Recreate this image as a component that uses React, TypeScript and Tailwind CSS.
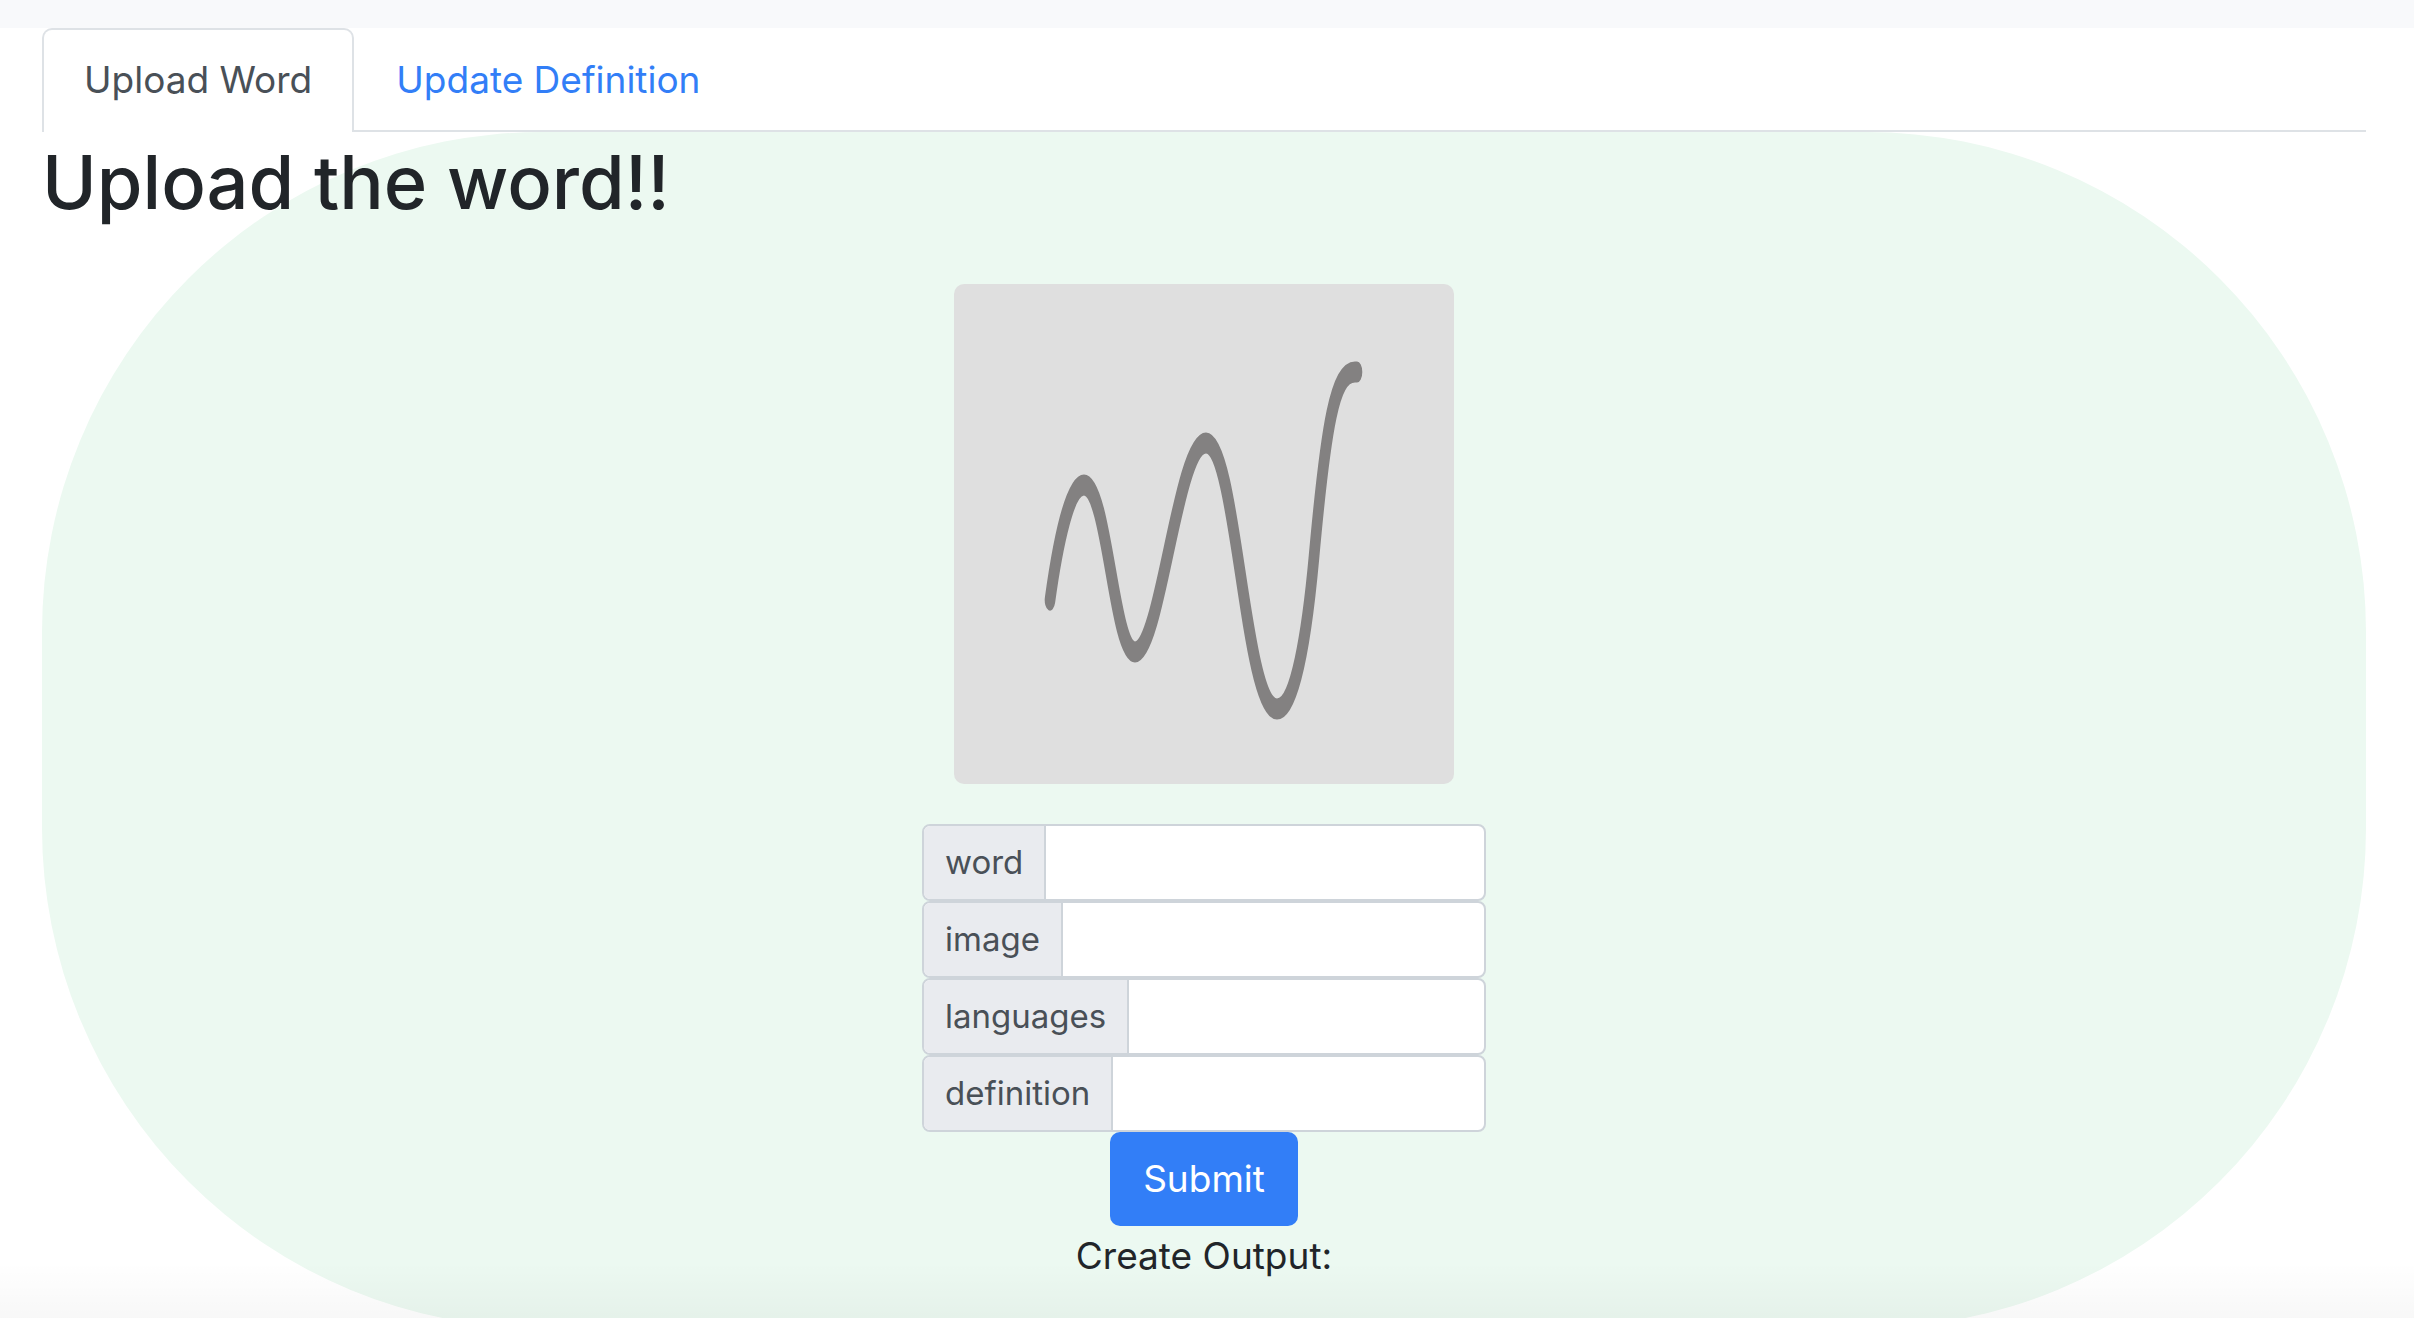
import { useState } from "react";

const fields = ["word", "image", "languages", "definition"];

function WavePicture() {
  return (
    <svg
      viewBox="0 0 500 500"
      role="img"
      aria-label="Hand-drawn wave"
      className="size-[500px] rounded-[10px] bg-[#dfdfdf]"
    >
      <path
        transform="scale(1 2)"
        d="M96 158C104 129 116 100.5 130 100.5C153 100.5 160 184 181 184C206 184 224 79.5 252 79.5C282 79.5 291 212.5 323 212.5C341 212.5 353 175 360 136.5C372 70 381 44 401 44L403 44"
        fill="none"
        stroke="#838181"
        strokeWidth="10.6"
        strokeLinecap="round"
        strokeLinejoin="round"
      />
    </svg>
  );
}

export default function App() {
  const [values, setValues] = useState<Record<string, string>>({});

  return (
    <div className="relative h-screen overflow-hidden bg-white font-['Inter',sans-serif] text-[#212529]">
      <header className="h-7 bg-[#f8f9fb]" />
      <main className="mr-12 ml-[42px]">
        <nav className="flex border-b-2 border-[#dee2e6] text-[37px] leading-[60px]">
          <a
            href="#upload"
            aria-current="page"
            className="-mb-0.5 rounded-t-[10px] border-2 border-b-0 border-[#dee2e6] bg-white px-10 pt-5 pb-[22px] text-[#495057]"
          >
            Upload Word
          </a>
          <a href="#update" className="px-[42px] pt-[22px] pb-5 text-[#327ef7]">
            Update Definition
          </a>
        </nav>

        <section className="rounded-[500px] bg-[#ecf9f1] pb-[42px]">
          <h1 className="text-[74px] leading-[100px] font-medium">Upload the word!!</h1>
          <form className="flex flex-col items-center pt-13" onSubmit={(e) => e.preventDefault()}>
            <WavePicture />
            <div className="mt-10 w-[564px]">
              {fields.map((name) => (
                <div
                  key={name}
                  className="flex h-[77px] overflow-hidden rounded-[8px] border-2 border-[#ced4da] bg-white"
                >
                  <label
                    htmlFor={name}
                    className="flex items-center border-r-2 border-[#ced4da] bg-[#e9ebef] px-[21px] pb-0.5 text-[33px] leading-[52px] text-[#495057]"
                  >
                    {name}
                  </label>
                  <input
                    id={name}
                    type="text"
                    value={values[name] ?? ""}
                    onChange={(e) => setValues({ ...values, [name]: e.target.value })}
                    className="min-w-0 flex-1 px-5 text-[33px] text-[#495057] outline-none"
                  />
                </div>
              ))}
            </div>
            <button
              type="submit"
              className="h-[94px] rounded-[10px] bg-[#327ef7] px-[33px] text-[37px] leading-[60px] text-white"
            >
              Submit
            </button>
            <p className="text-[37px] leading-[60px]">Create Output:</p>
          </form>
        </section>
      </main>
      <div className="pointer-events-none absolute inset-x-0 bottom-0 h-14 bg-linear-to-b from-black/0 to-black/3" />
    </div>
  );
}
